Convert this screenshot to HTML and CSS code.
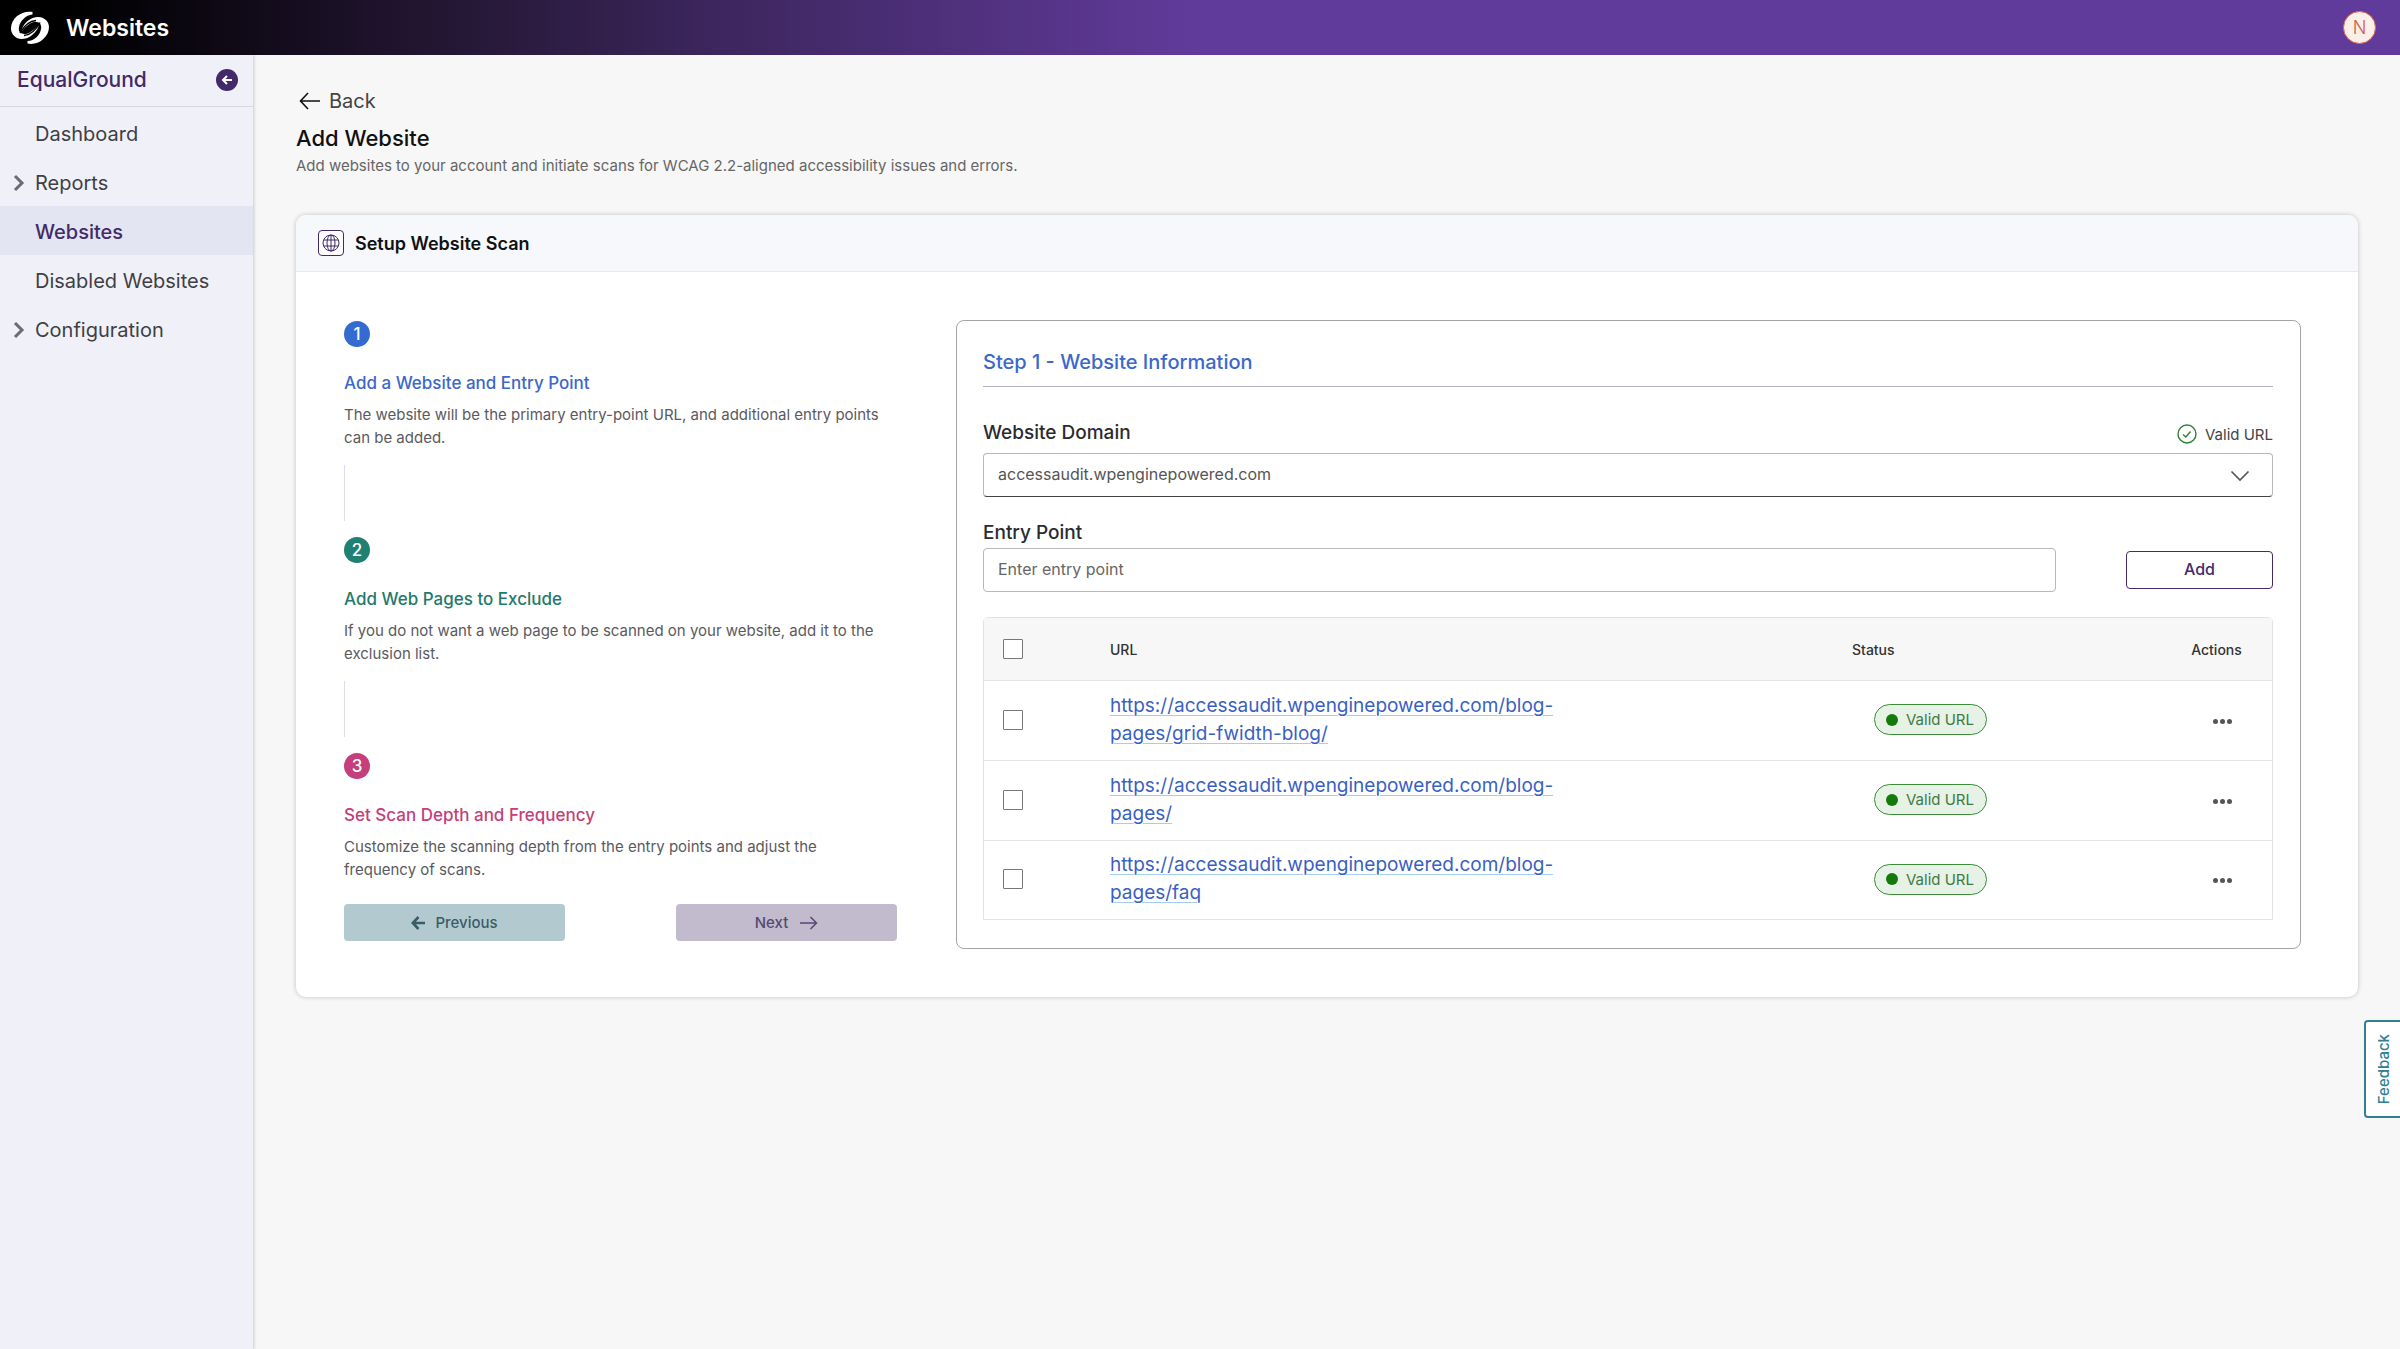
FILE: index.html
```html
<!DOCTYPE html>
<html lang="en">
<head>
<meta charset="utf-8">
<title>Websites</title>
<link rel="stylesheet" href="styles.css">
</head>
<body>
<header class="topbar">
  <svg class="logo" viewBox="0 0 38 34" width="38" height="34" aria-hidden="true">
    <path fill="#fff" d="M21.500 1C12 -1 0 6 0 17.500C0 22 3 25.500 6 27C10 29 16 28 20 25C24 22 28 17 27.500 14C24 18 19 22.500 14.500 23C9.500 23.500 7 20.500 8 16C9 10 15 4 21.500 3.500Z"/>
    <path fill="#fff" d="M16.500 32.500C26 35 38 27 38 16C38 11.500 35 8.500 32 7C28 5 22 6 18 9C14 12 10.500 16.500 11 20C14 16 19 11.500 23.500 11C28.500 10.500 31 13.500 30 18C29 24 23.500 30 16.500 30Z"/>
    <path fill="none" stroke="#000" stroke-width="1.500" d="M9 22C13 15 18 10 25 9.500M29 11.500C25 19 20 24 13 24.500"/>
  </svg>
  <h1 class="topbar-title">Websites</h1>
  <button class="avatar" type="button">N</button>
</header>
<div class="layout">
  <nav class="sidebar">
    <div class="brand">
      <span>EqualGround</span>
      <button class="collapse" type="button" aria-label="Collapse menu">
        <svg viewBox="0 0 22 22" width="22" height="22"><path d="M16 11H7M11 7L7 11L11 15" fill="none" stroke="#fff" stroke-width="2"/></svg>
      </button>
    </div>
    <ul class="menu">
      <li><a class="menu-link" href="#">Dashboard</a></li>
      <li><a class="menu-link" href="#"><svg class="caret" viewBox="0 0 12 18" width="12" height="18"><path d="M2 2L9 9L2 16" fill="none" stroke="#6b6b70" stroke-width="3"/></svg>Reports</a></li>
      <li><a class="menu-link current" href="#">Websites</a></li>
      <li><a class="menu-link" href="#">Disabled Websites</a></li>
      <li><a class="menu-link" href="#"><svg class="caret" viewBox="0 0 12 18" width="12" height="18"><path d="M2 2L9 9L2 16" fill="none" stroke="#6b6b70" stroke-width="3"/></svg>Configuration</a></li>
    </ul>
  </nav>
  <main class="content">
    <a class="back" href="#">
      <svg viewBox="0 0 22 18" width="22" height="18"><path d="M21 9H2M9 1L1.500 9L9 17" fill="none" stroke="#111" stroke-width="1.600"/></svg>
      Back
    </a>
    <h2 class="page-title">Add Website</h2>
    <p class="page-text">Add websites to your account and initiate scans for WCAG 2.2-aligned accessibility issues and errors.</p>
    <section class="card">
      <div class="card-head">
        <span class="card-icon">
          <svg viewBox="0 0 18 18" width="18" height="18" fill="none" stroke="#3f2a6b" stroke-width="1"><circle cx="9" cy="9" r="8"/><ellipse cx="9" cy="9" rx="4" ry="8"/><path d="M9 1V17M2 6H16M2 12H16"/></svg>
        </span>
        <h3 class="card-title">Setup Website Scan</h3>
      </div>
      <div class="card-body">
        <div class="steps">
          <div class="step blue">
            <span class="step-number">1</span>
            <h4 class="step-title">Add a Website and Entry Point</h4>
            <p class="step-text">The website will be the primary entry-point URL, and additional entry points can be added.</p>
          </div>
          <div class="step green">
            <span class="step-number">2</span>
            <h4 class="step-title">Add Web Pages to Exclude</h4>
            <p class="step-text">If you do not want a web page to be scanned on your website, add it to the exclusion list.</p>
          </div>
          <div class="step pink">
            <span class="step-number">3</span>
            <h4 class="step-title">Set Scan Depth and Frequency</h4>
            <p class="step-text">Customize the scanning depth from the entry points and adjust the frequency of scans.</p>
          </div>
          <div class="step-buttons">
            <button class="nav-button previous" type="button">
              <svg viewBox="0 0 14 14" width="14" height="14"><path d="M14 7H2M7.500 1L1.800 7L7.500 13" fill="none" stroke="currentColor" stroke-width="2.600"/></svg>
              Previous
            </button>
            <button class="nav-button next" type="button">
              Next
              <svg viewBox="0 0 18 14" width="18" height="14"><path d="M0 7H16M10.500 1L16.500 7L10.500 13" fill="none" stroke="currentColor" stroke-width="1.500"/></svg>
            </button>
          </div>
        </div>
        <form class="panel">
          <h3 class="panel-title">Step 1 - Website Information</h3>
          <div class="label-row">
            <label class="label" for="domain">Website Domain</label>
            <span class="valid">
              <svg viewBox="0 0 20 20" width="20" height="20" fill="none" stroke="#2f8132" stroke-width="1.400"><circle cx="10" cy="10" r="9"/><path d="M6 10.500L8.800 13L13.500 7.500"/></svg>
              Valid URL
            </span>
          </div>
          <div class="select-wrap">
            <select class="field domain" id="domain"><option>accessaudit.wpenginepowered.com</option></select>
            <svg class="chevron" viewBox="0 0 20 12" width="20" height="12"><path d="M1.500 1.500L10 10L18.500 1.500" fill="none" stroke="#555" stroke-width="1.600"/></svg>
          </div>
          <label class="label entry-label" for="entry">Entry Point</label>
          <div class="entry-row">
            <input class="field entry" id="entry" type="text" placeholder="Enter entry point">
            <button class="add" type="button">Add</button>
          </div>
          <table class="urls">
            <colgroup><col class="col-check"><col class="col-url"><col class="col-space"><col class="col-status"><col class="col-actions"></colgroup>
            <thead>
              <tr><th><input class="check" type="checkbox" aria-label="Select all"></th><th>URL</th><th></th><th>Status</th><th class="actions">Actions</th></tr>
            </thead>
            <tbody>
              <tr>
                <td><input class="check" type="checkbox" aria-label="Select row 1"></td>
                <td><a class="url" href="#">https://accessaudit.wpenginepowered.com/blog-pages/grid-fwidth-blog/</a></td><td></td>
                <td><span class="pill">Valid URL</span></td>
                <td class="actions"><button class="more" type="button" aria-label="More actions"><i></i><i></i><i></i></button></td>
              </tr>
              <tr>
                <td><input class="check" type="checkbox" aria-label="Select row 2"></td>
                <td><a class="url" href="#">https://accessaudit.wpenginepowered.com/blog-pages/</a></td><td></td>
                <td><span class="pill">Valid URL</span></td>
                <td class="actions"><button class="more" type="button" aria-label="More actions"><i></i><i></i><i></i></button></td>
              </tr>
              <tr>
                <td><input class="check" type="checkbox" aria-label="Select row 3"></td>
                <td><a class="url" href="#">https://accessaudit.wpenginepowered.com/blog-pages/faq</a></td><td></td>
                <td><span class="pill">Valid URL</span></td>
                <td class="actions"><button class="more" type="button" aria-label="More actions"><i></i><i></i><i></i></button></td>
              </tr>
            </tbody>
          </table>
        </form>
      </div>
    </section>
  </main>
</div>
<button class="feedback" type="button">Feedback</button>
</body>
</html>
```
FILE: styles.css
```css
* { box-sizing: border-box; }
body {
  margin: 0;
  min-height: 100vh;
  display: flex;
  flex-direction: column;
  background: #f7f7f7;
  color: #2b2b2f;
  font-family: Inter, "Liberation Sans", sans-serif;
  font-size: 16px;
}
h1, h2, h3, h4, p, ul { margin: 0; padding: 0; }
ul { list-style: none; }
button, input, select { font-family: inherit; }
svg { flex: none; }

.topbar {
  display: flex;
  align-items: center;
  gap: 17px;
  height: 55px;
  padding: 0 24px 0 11px;
  background: linear-gradient(90deg, #000 3%, #291a3c 21%, #3b255b 29%, #613b9b 50%);
}
.topbar-title { flex: 1; color: #fff; font-size: 23px; font-weight: 600; }
.avatar {
  width: 33px;
  height: 33px;
  padding: 0;
  border: 1px solid #d4674f;
  border-radius: 50%;
  background: #fbefe9;
  color: #cf6147;
  font-size: 18px;
  font-weight: 300;
}

.layout { flex: 1; display: flex; }
.sidebar {
  flex: none;
  width: 253px;
  background: #f0f1f8;
  box-shadow: 1px 0 3px #00000030;
}
.brand {
  display: flex;
  align-items: center;
  justify-content: space-between;
  height: 52px;
  padding: 0 15px 2px 17px;
  border-bottom: 1px solid #d8d8e0;
  color: #432a68;
  font-size: 21px;
  font-weight: 500;
}
.collapse {
  display: flex;
  padding: 0;
  border: 0;
  border-radius: 50%;
  background: #432a68;
}
.menu { padding-top: 1px; }
.menu-link {
  position: relative;
  display: flex;
  align-items: center;
  height: 49px;
  padding: 2px 0 0 35px;
  color: #3f3f45;
  font-size: 20px;
  text-decoration: none;
}
.current { background: #e3e5f3; color: #432a68; font-weight: 500; }
.caret { position: absolute; left: 13px; }

.content { flex: 1; padding: 32px 42px 40px 43px; }
.back {
  display: inline-flex;
  align-items: center;
  gap: 8px;
  height: 28px;
  padding-left: 3px;
  color: #444;
  font-size: 20px;
  text-decoration: none;
}
.page-title { margin-top: 9px; color: #111; font-size: 22px; font-weight: 500; line-height: 28px; }
.page-text { margin-top: 2px; color: #666; font-size: 15px; line-height: 24px; }

.card {
  margin-top: 37px;
  border-radius: 10px;
  background: #fff;
  box-shadow: 0 0 5px #00000038;
}
.card-head {
  display: flex;
  align-items: center;
  gap: 11px;
  height: 57px;
  padding: 0 22px;
  border-bottom: 1px solid #e6e8ec;
  border-radius: 10px 10px 0 0;
  background: #f6f8fb;
}
.card-icon {
  display: grid;
  place-items: center;
  width: 26px;
  height: 26px;
  border: 1px solid #432a68;
  border-radius: 4px;
  background: #fff;
}
.card-title { color: #111; font-size: 18px; font-weight: 600; }
.card-body { display: flex; gap: 59px; padding: 48px 57px 48px 48px; }

.steps { flex: 0 0 553px; display: flex; flex-direction: column; padding-top: 1px; }
.step-number {
  display: grid;
  place-items: center;
  width: 26px;
  height: 26px;
  border-radius: 50%;
  color: #fff;
  font-size: 17px;
  font-weight: 500;
}
.step-title { margin-top: 24px; font-size: 17px; font-weight: 500; line-height: 24px; }
.step-text {
  margin-top: 8px;
  padding-right: 6px;
  color: #5a5a5e;
  font-size: 15px;
  line-height: 23px;
}
.step:not(.pink)::after {
  content: "";
  display: block;
  height: 56px;
  margin: 16px 0;
  border-left: 1px solid #dcdcee;
}
.blue .step-number { background: #346bd0; }
.green .step-number { background: #1f8073; }
.pink .step-number { background: #c43f7c; }
.blue .step-title { color: #3a68cc; }
.green .step-title { color: #1f7a6c; }
.pink .step-title { color: #c43f7c; }
.pink .step-text { padding-right: 40px; }
.step-buttons { display: flex; justify-content: space-between; margin-top: 23px; }
.nav-button {
  display: flex;
  align-items: center;
  justify-content: center;
  gap: 12px;
  width: 221px;
  height: 37px;
  border: 0;
  border-radius: 4px;
  font-size: 15px;
  font-weight: 500;
}
.previous { background: #b2cacf; color: #3a5c67; gap: 10px; }
.next { background: #c2bacd; color: #564972; }

.panel {
  flex: 1;
  padding: 25px 27px 28px 26px;
  border: 1px solid #a5a5a8;
  border-radius: 8px;
}
.panel-title {
  padding-bottom: 8px;
  border-bottom: 1px solid #b0b0cc;
  color: #3a68cc;
  font-size: 20px;
  font-weight: 500;
  line-height: 32px;
}
.label-row { display: flex; justify-content: space-between; align-items: center; margin-top: 32px; }
.label { display: block; font-size: 19px; font-weight: 500; line-height: 28px; }
.valid { display: flex; align-items: center; gap: 8px; color: #444; font-size: 15px; padding-top: 2px; }
.select-wrap { position: relative; margin-top: 6px; }
.field {
  height: 44px;
  padding: 0 15px 2px 14px;
  border: 1px solid #b8b8bb;
  border-radius: 4px;
  background: #fff;
  color: #555;
  font-size: 16px;
}
.field::placeholder { color: #666; opacity: 1; }
.domain { display: block; width: 100%; appearance: none; border-bottom-color: #444; }
.chevron { position: absolute; right: 23px; top: 17px; pointer-events: none; }
.entry-label { margin-top: 22px; }
.entry-row { display: flex; align-items: center; gap: 70px; margin-top: 1px; }
.entry { flex: 1; }
.add {
  width: 147px;
  height: 38px;
  padding-bottom: 3px;
  border: 1px solid #432a68;
  border-radius: 4px;
  background: #fff;
  color: #432a68;
  font-size: 16px;
  font-weight: 500;
}

.urls {
  width: 100%;
  margin-top: 25px;
  border: 1px solid #e2e2e4;
  border-radius: 5px 5px 0 0;
  border-spacing: 0;
  table-layout: fixed;
}
.col-check { width: 126px; }
.col-url { width: 465px; }
.col-status { width: 323px; }
.col-actions { width: 97px; }
.urls th {
  height: 62px;
  padding: 0;
  background: #f7f7f7;
  color: #333;
  font-size: 14px;
  font-weight: 500;
  text-align: left;
}
.urls td { height: 80px; padding: 0 0 2px; border-top: 1px solid #e4e4e6; }
.urls tr:last-child td { height: 79px; }
.urls th:first-child, .urls td:first-child { padding-left: 19px; }
.urls .actions { text-align: center; }
.urls th.actions { padding-right: 14px; }
.check {
  display: block;
  width: 20px;
  height: 20px;
  margin: 0;
  appearance: none;
  border: 1px solid #77777b;
  border-radius: 1px;
  background: #fff;
}
.url {
  color: #3a5fc4;
  font-size: 19px;
  line-height: 28px;
  text-decoration-color: #a5cdf0;
  text-decoration-thickness: 1px;
  text-underline-offset: 3px;
}
.pill {
  display: inline-flex;
  align-items: center;
  gap: 8px;
  height: 31px;
  margin-left: 22px;
  padding: 0 12px 0 11px;
  border: 1px solid #3d8b37;
  border-radius: 16px;
  background: #e6f2e6;
  color: #3f7a44;
  font-size: 15px;
}
.pill::before { content: ""; width: 12px; height: 12px; border-radius: 50%; background: #15790b; }
.more {
  display: inline-flex;
  gap: 2px;
  padding: 8px;
  border: 0;
  background: none;
}
.more i { width: 5px; height: 5px; border-radius: 50%; background: #555; }
.urls td.actions { padding-right: 2px; }

.feedback {
  position: fixed;
  right: -2px;
  top: 1020px;
  width: 38px;
  height: 98px;
  padding: 0;
  border: 2px solid #317f94;
  border-radius: 4px 0 0 4px;
  background: #fff;
  color: #317f94;
  font-size: 15px;
  font-weight: 500;
  writing-mode: sideways-lr;
}
```
